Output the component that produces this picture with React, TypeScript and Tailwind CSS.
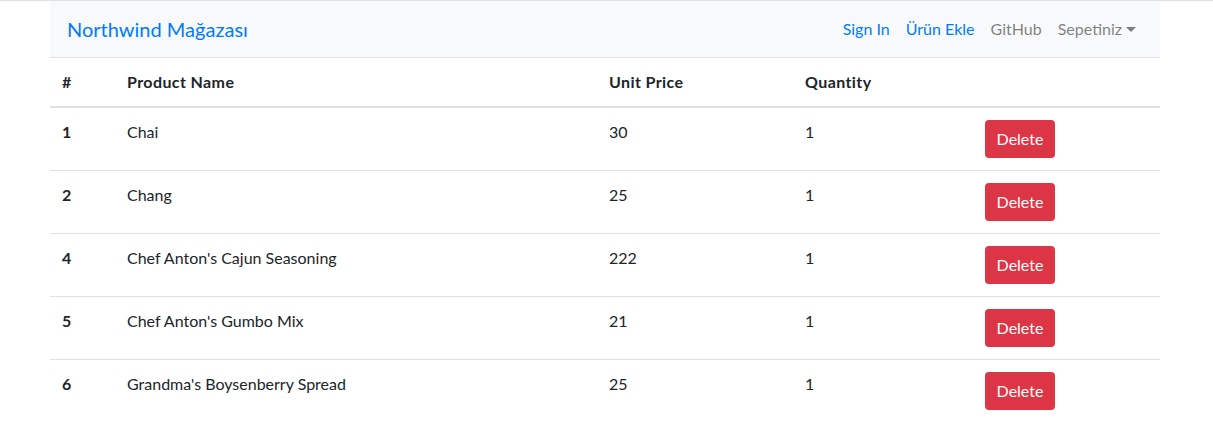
import React from "react";

const rows = [
  { id: 1, name: "Chai", price: 30, qty: 1 },
  { id: 2, name: "Chang", price: 25, qty: 1 },
  { id: 4, name: "Chef Anton's Cajun Seasoning", price: 222, qty: 1 },
  { id: 5, name: "Chef Anton's Gumbo Mix", price: 21, qty: 1 },
  { id: 6, name: "Grandma's Boysenberry Spread", price: 25, qty: 1 },
];

const cols = "grid grid-cols-[65px_482px_196px_180px_187px]";

export default function App() {
  return (
    <div
      className="min-h-[443px] bg-white border-t border-[#dee2e6] text-[16px] text-[#212529]"
      style={{ fontFamily: 'Lato, "Noto Sans", sans-serif' }}
    >
      <div className="w-[1110px] ml-[50px]">
        <nav className="h-[56px] bg-[#f8f9fa] flex items-center justify-between px-4">
          <span className="text-[20px] leading-[30px] text-[#007bff] ml-px">Northwind Mağazası</span>
          <div className="flex items-center">
            <span className="px-2 text-[#007bff] leading-6">Sign In</span>
            <span className="px-2 text-[#007bff] leading-6">Ürün Ekle</span>
            <span className="px-2 text-black/50 leading-6">GitHub</span>
            <span className="px-2 text-black/50 leading-6 flex items-center">
              Sepetiniz
              <span className="ml-[4px] inline-block w-0 h-0 border-t-[5px] border-t-black/50 border-l-[5px] border-l-transparent border-r-[5px] border-r-transparent" />
            </span>
          </div>
        </nav>
        <div className={`${cols} border-t border-[#dee2e6] border-b-2 font-bold leading-6 tracking-[0.4px]`}>
          <div className="p-3">#</div>
          <div className="p-3">Product Name</div>
          <div className="p-3">Unit Price</div>
          <div className="p-3">Quantity</div>
          <div className="p-3"></div>
        </div>
        {rows.map((r, i) => (
          <div
            key={r.id}
            className={`${cols} leading-6 ${i > 0 ? "border-t border-[#dee2e6]" : ""}`}
          >
            <div className="p-3 font-bold">{r.id}</div>
            <div className="p-3">{r.name}</div>
            <div className="p-3">{r.price}</div>
            <div className="p-3">{r.qty}</div>
            <div className="p-3">
              <button className="h-[38px] w-[70px] rounded bg-[#dc3545] text-white leading-6">
                Delete
              </button>
            </div>
          </div>
        ))}
      </div>
    </div>
  );
}
